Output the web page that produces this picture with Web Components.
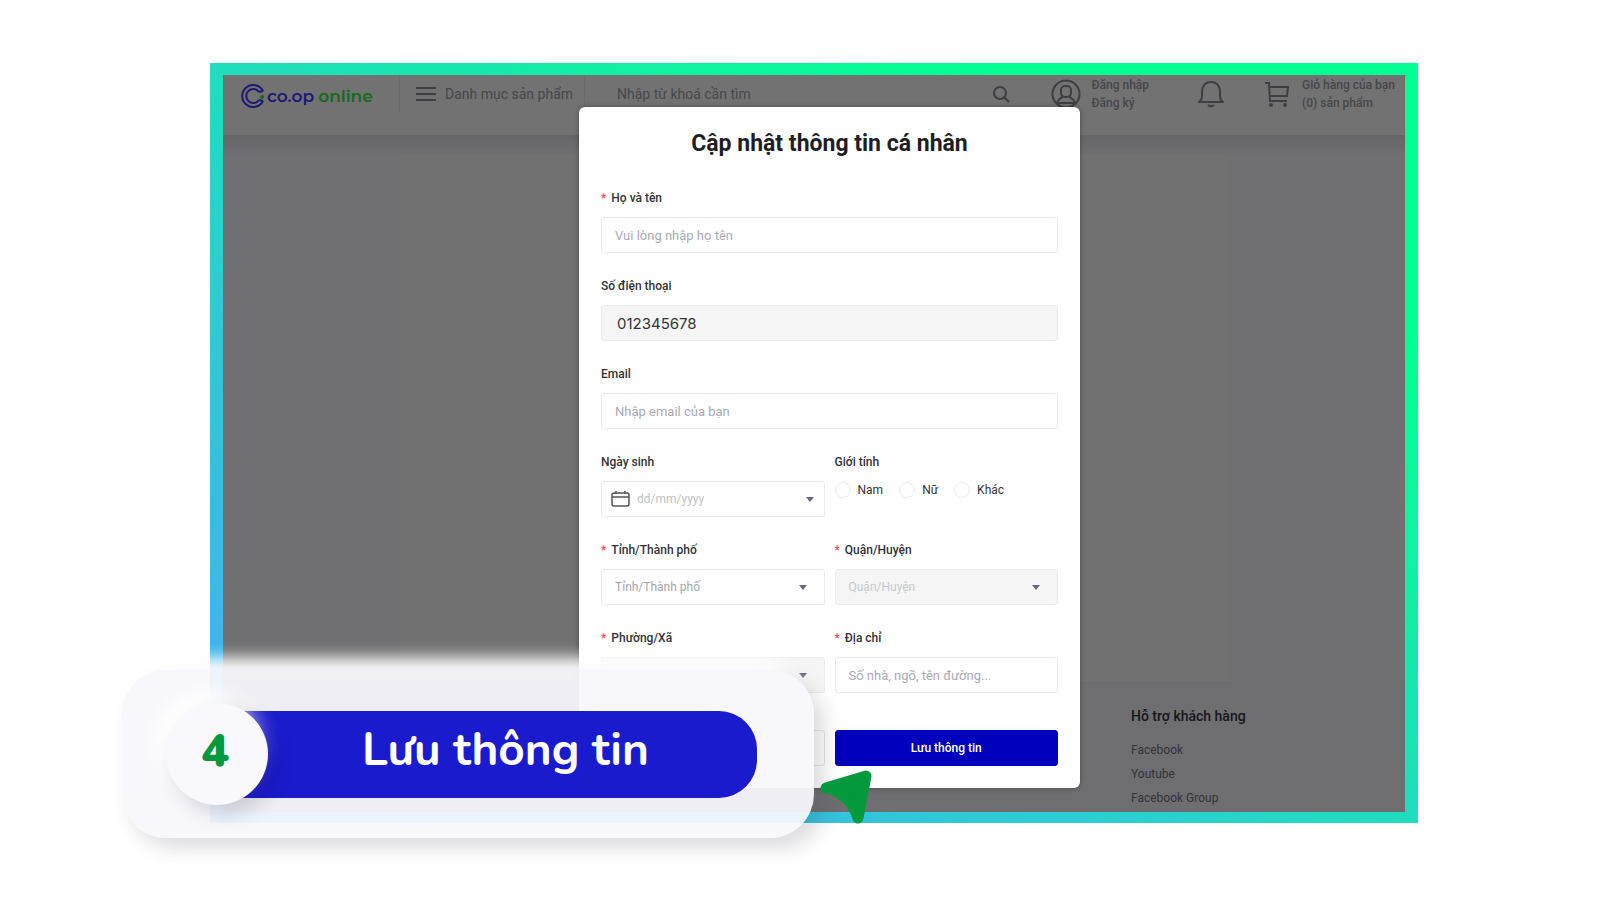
<!DOCTYPE html>
<html lang="vi">
<head>
<meta charset="utf-8">
<meta name="viewport" content="width=device-width, initial-scale=1">
<title>Cập nhật thông tin cá nhân</title>
<style>
  body {
    margin: 0;
    background: #fff;
    font-family: Roboto, "Noto Sans", sans-serif;
    font-size: 12px;
    color: #333338;
  }
</style>
</head>
<body>
<guide-stage>
  <shop-page>
    <shop-header slot="header"></shop-header>
    <shop-footer slot="footer"></shop-footer>
    <profile-dialog slot="dialog"></profile-dialog>
  </shop-page>
  <step-callout slot="callout" step="4">Lưu thông tin</step-callout>
</guide-stage>

<script>
class GuideStage extends HTMLElement {
  connectedCallback() {
    this.attachShadow({ mode: 'open' });
    this.shadowRoot.innerHTML = `
      <style>
        :host {
          display: flex;
          position: relative;
          box-sizing: border-box;
          min-height: 100vh;
          padding: 63px 182px 78px 210px;
        }
        .frame {
          flex: 1;
          display: flex;
          padding: 12px 13px 11px;
          background: linear-gradient(to top right, #42b0f0 8%, #2bcfd0 38%, #12efa4 66%, #00ff90 82%);
        }
        .callout {
          position: absolute;
          left: 122px;
          bottom: 63px;
        }
        .cursor {
          position: absolute;
          left: 820px;
          bottom: 77px;
        }
      </style>
      <div class="frame"><slot></slot></div>
      <div class="callout"><slot name="callout"></slot></div>
      <svg class="cursor" width="52" height="54" viewBox="0 0 52 54" aria-hidden="true">
        <path d="M6 18 L46 6 L38 48 Q31 24 6 18 Z" fill="#04993c" stroke="#04993c" stroke-width="11" stroke-linejoin="round"/>
      </svg>
    `;
  }
}
customElements.define('guide-stage', GuideStage);

class ShopPage extends HTMLElement {
  connectedCallback() {
    this.attachShadow({ mode: 'open' });
    this.shadowRoot.innerHTML = `
      <style>
        :host {
          flex: 1;
          display: flex;
          flex-direction: column;
          position: relative;
          background: #707072;
        }
        main {
          flex: 1;
          display: flex;
          justify-content: center;
          background: linear-gradient(#666668, #707072 20px);
        }
        .content {
          width: 70%;
          margin-top: 20px;
          background: #717171;
        }
        .overlay {
          position: absolute;
          inset: 0;
          display: flex;
          justify-content: center;
          align-items: flex-start;
          padding: 32px 0 0 31px;
        }
      </style>
      <slot name="header"></slot>
      <main><div class="content"></div></main>
      <slot name="footer"></slot>
      <div class="overlay"><slot name="dialog"></slot></div>
    `;
  }
}
customElements.define('shop-page', ShopPage);

class ShopHeader extends HTMLElement {
  connectedCallback() {
    this.attachShadow({ mode: 'open' });
    this.shadowRoot.innerHTML = `
      <style>
        :host {
          display: flex;
          align-items: center;
          box-sizing: border-box;
          height: 60px;
          padding: 0 10px 22px 18px;
          background: #727272;
          color: #46464b;
        }
        a, button {
          display: flex;
          align-items: center;
          color: inherit;
          text-decoration: none;
        }
        button {
          padding: 0;
          border: 0;
          background: none;
          font: inherit;
        }
        svg {
          fill: none;
          stroke: #3e3e43;
          stroke-width: 2;
        }
        .logo {
          box-sizing: border-box;
          width: 135px;
          gap: 2px;
          padding-top: 3px;
          font: 600 17px Montserrat, Nunito, Lato, sans-serif;
          white-space: nowrap;
          color: #1d1878;
        }
        .logo b {
          font-weight: 600;
          margin-left: 4px;
          color: #156a20;
        }
        .menu {
          gap: 9px;
          height: 38px;
          margin-left: 23px;
          padding: 0 11px 0 16px;
          border: solid #6c6c6c;
          border-width: 0 1px;
          font-size: 14px;
        }
        .search {
          flex: 1;
          display: flex;
          align-items: center;
          min-width: 0;
          margin-left: 22px;
          padding: 0 16px 0 10px;
        }
        input {
          flex: 1;
          min-width: 0;
          padding: 0;
          border: 0;
          outline: 0;
          background: none;
          font: inherit;
          font-size: 14px;
        }
        input::placeholder {
          color: #48484b;
        }
        .links {
          line-height: 18px;
          font-weight: 500;
        }
        .account {
          gap: 11px;
          display: flex;
          align-items: center;
          margin-left: 25px;
        }
        .bell {
          margin: 0 40px 0 48px;
        }
        .cart {
          gap: 12px;
        }
      </style>
      <a class="logo" href="#" aria-label="co.op online">
        <svg width="24" height="24" viewBox="0 0 24 24" style="stroke:#1d1878">
          <path d="M22 7 A11 11 0 1 0 22 17"/>
          <path d="M18 8 A7 7 0 1 0 18 16"/>
          <path d="M22 7 L18 8 M22 17 L18 16"/>
          <circle cx="21" cy="13" r="1" fill="#156a20" stroke="#156a20"/>
        </svg>
        <span>co.op<b>online</b></span>
      </a>
      <button class="menu" type="button">
        <svg width="20" height="16" viewBox="0 0 20 16"><path d="M0 2h20M0 8h20M0 14h20"/></svg>
        Danh mục sản phẩm
      </button>
      <div class="search">
        <input type="text" placeholder="Nhập từ khoá cần tìm" aria-label="Tìm kiếm">
        <button type="button" aria-label="Tìm">
          <svg width="18" height="18" viewBox="0 0 18 18"><circle cx="8" cy="8" r="6"/><path d="M12.500 12.500 L17 17"/></svg>
        </button>
      </div>
      <div class="account">
        <svg width="30" height="30" viewBox="0 0 30 30">
          <circle cx="15" cy="15" r="13.500"/>
          <rect x="10" y="7" width="10" height="11" rx="4"/>
          <path d="M6 24 Q8 19 12 18 M18 18 Q22 19 24 24 M7 24 H23"/>
        </svg>
        <div class="links"><a href="#">Đăng nhập</a><a href="#">Đăng ký</a></div>
      </div>
      <button class="bell" type="button" aria-label="Thông báo">
        <svg width="28" height="28" viewBox="0 0 28 28">
          <path d="M2 22 Q5 20 5 16 V11 Q6 2 14 2 Q22 2 23 11 V16 Q23 20 26 22 Z" stroke-linejoin="round"/>
          <path d="M11 25 Q14 28 17 25"/>
        </svg>
      </button>
      <a class="cart" href="#">
        <svg width="25" height="26" viewBox="0 0 25 26">
          <path d="M0 2 H4 L5 20 H22 M5 6 H23 L22 15 H5"/>
          <circle cx="6" cy="24" r="1"/><circle cx="20" cy="24" r="1"/>
        </svg>
        <span class="links">Giỏ hàng của bạn<br>(0) sản phẩm</span>
      </a>
    `;
  }
}
customElements.define('shop-header', ShopHeader);

class ShopFooter extends HTMLElement {
  connectedCallback() {
    this.attachShadow({ mode: 'open' });
    this.shadowRoot.innerHTML = `
      <style>
        :host {
          display: flex;
          justify-content: flex-end;
          background: #6e6e71;
          padding: 25px 0 2px;
        }
        nav {
          display: flex;
          flex-direction: column;
          width: 274px;
          line-height: 24px;
        }
        h2 {
          margin: 0 0 12px;
          font-size: 14px;
          font-weight: 500;
          line-height: 20px;
          color: #17171a;
        }
        a {
          color: #333337;
          text-decoration: none;
        }
      </style>
      <nav>
        <h2>Hỗ trợ khách hàng</h2>
        <a href="#">Facebook</a>
        <a href="#">Youtube</a>
        <a href="#">Facebook Group</a>
      </nav>
    `;
  }
}
customElements.define('shop-footer', ShopFooter);

// One labelled control: type is text, date or select
class FormField extends HTMLElement {
  connectedCallback() {
    const type = this.getAttribute('type') || 'text';
    const hint = this.getAttribute('hint') || '';
    const off = this.hasAttribute('disabled') ? 'disabled' : '';
    const value = this.getAttribute('value') || '';
    const arrow = '<svg class="arrow" width="8" height="5" viewBox="0 0 8 5" aria-hidden="true"><path d="M0 0h8L4 5z" fill="#666680"/></svg>';
    const calendar = `<svg width="20" height="16" viewBox="0 0 20 16" fill="none" stroke="#55555a" stroke-width="1.500" aria-hidden="true">
      <rect x="1" y="2" width="17" height="13" rx="2"/><path d="M1 6h17M5 0v3M14 0v3"/></svg>`;
    const control = type === 'select'
      ? `<select id="control" ${off}><option>${hint}</option></select>${arrow}`
      : `${type === 'date' ? calendar : ''}<input id="control" type="text" placeholder="${hint}" value="${value}" ${off}>${type === 'date' ? arrow : ''}`;

    this.attachShadow({ mode: 'open' });
    this.shadowRoot.innerHTML = `
      <style>
        :host {
          display: flex;
          flex-direction: column;
          gap: 11px;
          min-width: 0;
        }
        label {
          line-height: 16px;
          font-weight: 500;
        }
        .required {
          color: #ff4d4f;
          margin-right: 5px;
        }
        .box {
          display: flex;
          align-items: center;
          box-sizing: border-box;
          height: 36px;
          padding: 0 13px;
          border: 1px solid #ebebed;
          border-radius: 3px;
          background: #fff;
        }
        :host([disabled]) .box {
          background: #f5f5f5;
        }
        :host([type="date"]) .box {
          gap: 6px;
          padding: 0 10px 0 9px;
        }
        :host([type="select"]) .box {
          padding-right: 17px;
        }
        input, select {
          flex: 1;
          min-width: 0;
          padding: 0;
          border: 0;
          outline: 0;
          background: none;
          appearance: none;
          font: inherit;
          color: #a5a5b2;
          opacity: 1;
        }
        input {
          font-size: 13px;
        }
        :host([type="date"]) input {
          font-size: 12px;
        }
        input:disabled {
          padding-left: 2px;
          font: 15px Inter, sans-serif;
          color: #333338;
        }
        select:disabled {
          color: #c8c8cc;
        }
        input::placeholder {
          color: #a9a9b6;
        }
        :host([type="date"]) input::placeholder {
          color: #bfbfc4;
        }
      </style>
      <label for="control">${this.hasAttribute('required') ? '<span class="required">*</span>' : ''}${this.getAttribute('label')}</label>
      <div class="box">${control}</div>
    `;
  }
}
customElements.define('form-field', FormField);

class GenderField extends HTMLElement {
  connectedCallback() {
    this.attachShadow({ mode: 'open' });
    this.shadowRoot.innerHTML = `
      <style>
        :host {
          display: flex;
          flex-direction: column;
          gap: 11px;
        }
        .title {
          line-height: 16px;
          font-weight: 500;
        }
        .options {
          display: flex;
          gap: 16px;
          line-height: 18px;
        }
        label {
          display: flex;
          align-items: center;
          gap: 7px;
        }
        input {
          appearance: none;
          width: 16px;
          height: 16px;
          margin: 0;
          border: 1px solid #ebebed;
          border-radius: 50%;
        }
      </style>
      <div class="title" id="title">Giới tính</div>
      <div class="options" role="radiogroup" aria-labelledby="title">
        <label><input type="radio" name="gender">Nam</label>
        <label><input type="radio" name="gender">Nữ</label>
        <label><input type="radio" name="gender">Khác</label>
      </div>
    `;
  }
}
customElements.define('gender-field', GenderField);

class ProfileDialog extends HTMLElement {
  connectedCallback() {
    this.attachShadow({ mode: 'open' });
    this.shadowRoot.innerHTML = `
      <style>
        :host {
          display: block;
          box-sizing: border-box;
          width: 501px;
          padding: 22px;
          border-radius: 6px;
          background: #fff;
          box-shadow: 0 0 5px rgba(0,0,0,0.35);
        }
        h1 {
          margin: 0 0 31px;
          font-size: 23px;
          font-weight: 700;
          line-height: 30px;
          text-align: center;
          color: #1e1e23;
        }
        form {
          display: grid;
          grid-template-columns: 1fr 1fr;
          gap: 25px 10px;
        }
        .wide {
          grid-column: 1 / -1;
        }
        button {
          height: 36px;
          margin-top: 12px;
          border: 1px solid #e3e3e6;
          border-radius: 3px;
          background: #fff;
          font: inherit;
          font-weight: 500;
        }
        .save {
          border-color: #0000b8;
          background: #0000bd;
          color: #fff;
        }
      </style>
      <h1>Cập nhật thông tin cá nhân</h1>
      <form>
        <form-field class="wide" label="Họ và tên" hint="Vui lòng nhập họ tên" required></form-field>
        <form-field class="wide" label="Số điện thoại" value="012345678" disabled></form-field>
        <form-field class="wide" label="Email" hint="Nhập email của bạn"></form-field>
        <form-field type="date" label="Ngày sinh" hint="dd/mm/yyyy"></form-field>
        <gender-field></gender-field>
        <form-field type="select" label="Tỉnh/Thành phố" hint="Tỉnh/Thành phố" required></form-field>
        <form-field type="select" label="Quận/Huyện" hint="Quận/Huyện" required disabled></form-field>
        <form-field type="select" label="Phường/Xã" required disabled></form-field>
        <form-field label="Địa chỉ" hint="Số nhà, ngõ, tên đường..." required></form-field>
        <button type="reset" aria-label="Hủy"></button>
        <button class="save" type="button">Lưu thông tin</button>
      </form>
    `;
  }
}
customElements.define('profile-dialog', ProfileDialog);

class StepCallout extends HTMLElement {
  connectedCallback() {
    this.attachShadow({ mode: 'open' });
    this.shadowRoot.innerHTML = `
      <style>
        :host {
          display: flex;
          align-items: center;
          box-sizing: border-box;
          width: 692px;
          height: 168px;
          padding: 0 57px 0 44px;
          border-radius: 44px;
          background: rgba(247,247,252,0.94);
          box-shadow: 10px 10px 20px rgba(60,60,80,0.18), -12px -12px 16px #fff;
          font-family: Nunito, Lato, sans-serif;
        }
        .step {
          position: relative;
          display: flex;
          align-items: center;
          justify-content: center;
          box-sizing: border-box;
          width: 102px;
          height: 102px;
          padding: 0 4px 8px 0;
          border-radius: 50%;
          background: #f8f8fd;
          box-shadow: 8px 8px 20px rgba(0,0,40,0.16), -12px -12px 24px #fff;
          font-size: 46px;
          font-weight: 900;
          color: #04993c;
        }
        .title {
          flex: 1;
          height: 87px;
          margin-left: -40px;
          padding-left: 26px;
          box-sizing: border-box;
          border-radius: 0 38px 38px 0;
          background: #1b1bce;
          font-size: 46px;
          font-weight: 700;
          line-height: 77px;
          text-align: center;
          color: #fff;
        }
      </style>
      <div class="step">${this.getAttribute('step')}</div>
      <div class="title"><slot></slot></div>
    `;
  }
}
customElements.define('step-callout', StepCallout);
</script>
</body>
</html>
